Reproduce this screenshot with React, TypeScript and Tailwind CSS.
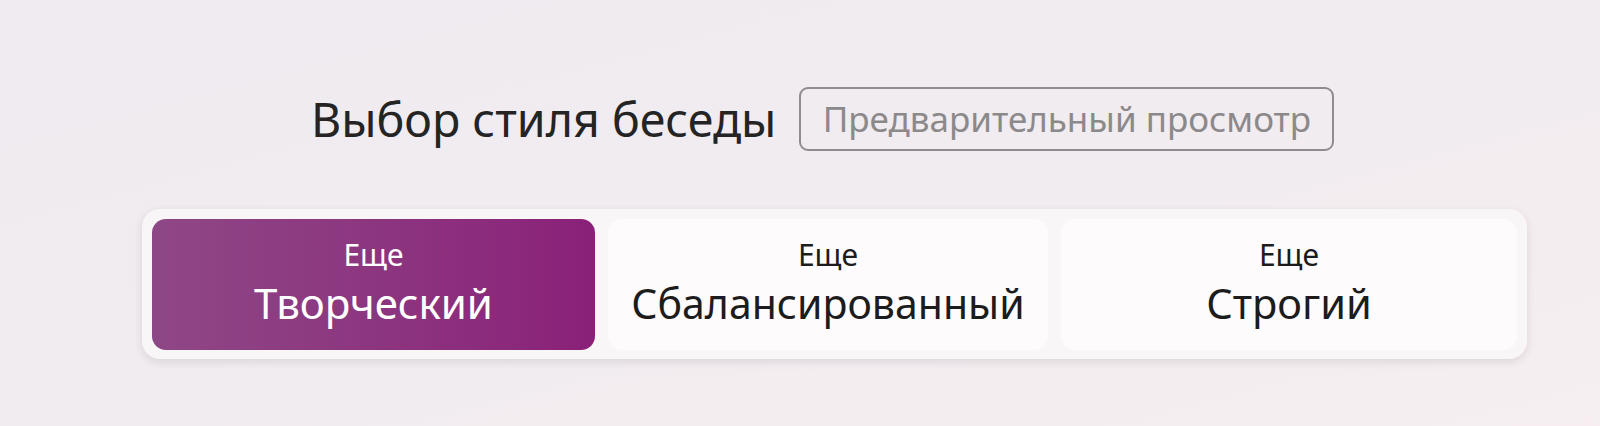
import React from 'react';

interface ToneOption {
  label: string;
  width: string;
  size: string;
  active?: boolean;
}

const options: ToneOption[] = [
  { label: 'Творческий', width: 'w-[443px]', size: 'text-[42px]', active: true },
  { label: 'Сбалансированный', width: 'w-[440px]', size: 'text-[41px]' },
  { label: 'Строгий', width: 'flex-1', size: 'text-[41.5px]' }
];

const ToneButton: React.FC<ToneOption> = ({ label, width, size, active = false }) => {
  const base = 'h-[131px] rounded-[14px] flex flex-col items-center justify-center';
  const look = active
    ? 'bg-gradient-to-r from-[#8e4786] to-[#8a2079] text-white'
    : 'bg-[#fdfbfc] text-[#1c1c1c]';
  return (
    <button className={`${base} ${width} ${look}`}>
      <span className="text-[30px] leading-[34px]">Еще</span>
      <span className={`${size} leading-[58px] mt-[2px]`}>{label}</span>
    </button>
  );
};

export default function App() {
  return (
    <div
      className="w-[1600px] h-[426px] overflow-hidden bg-gradient-to-br from-[#efebf0] via-[#f1ecf0] to-[#f6eef0]"
      style={{ fontFamily: '"Segoe UI", "Noto Sans", "Open Sans", sans-serif' }}
    >
      <div className="pt-[87px] pl-[311px] flex items-center gap-[23px]">
        <h1 className="text-[46.5px] leading-[56px] text-[#242424] font-normal">Выбор стиля беседы</h1>
        <div className="h-[64px] w-[535px] border-2 border-[#8f8b8e] rounded-[9px] flex items-center justify-center">
          <span className="text-[35px] leading-[44px] text-[#8c898b]">Предварительный просмотр</span>
        </div>
      </div>
      <div className="mt-[58px] ml-[142px] w-[1385px] h-[150px] bg-[#f8f6f7] rounded-[18px] shadow-[0_3px_8px_rgba(60,40,60,0.12)] p-[10px] flex gap-[13px]">
        {options.map(o => (
          <ToneButton key={o.label} {...o} />
        ))}
      </div>
    </div>
  );
}
